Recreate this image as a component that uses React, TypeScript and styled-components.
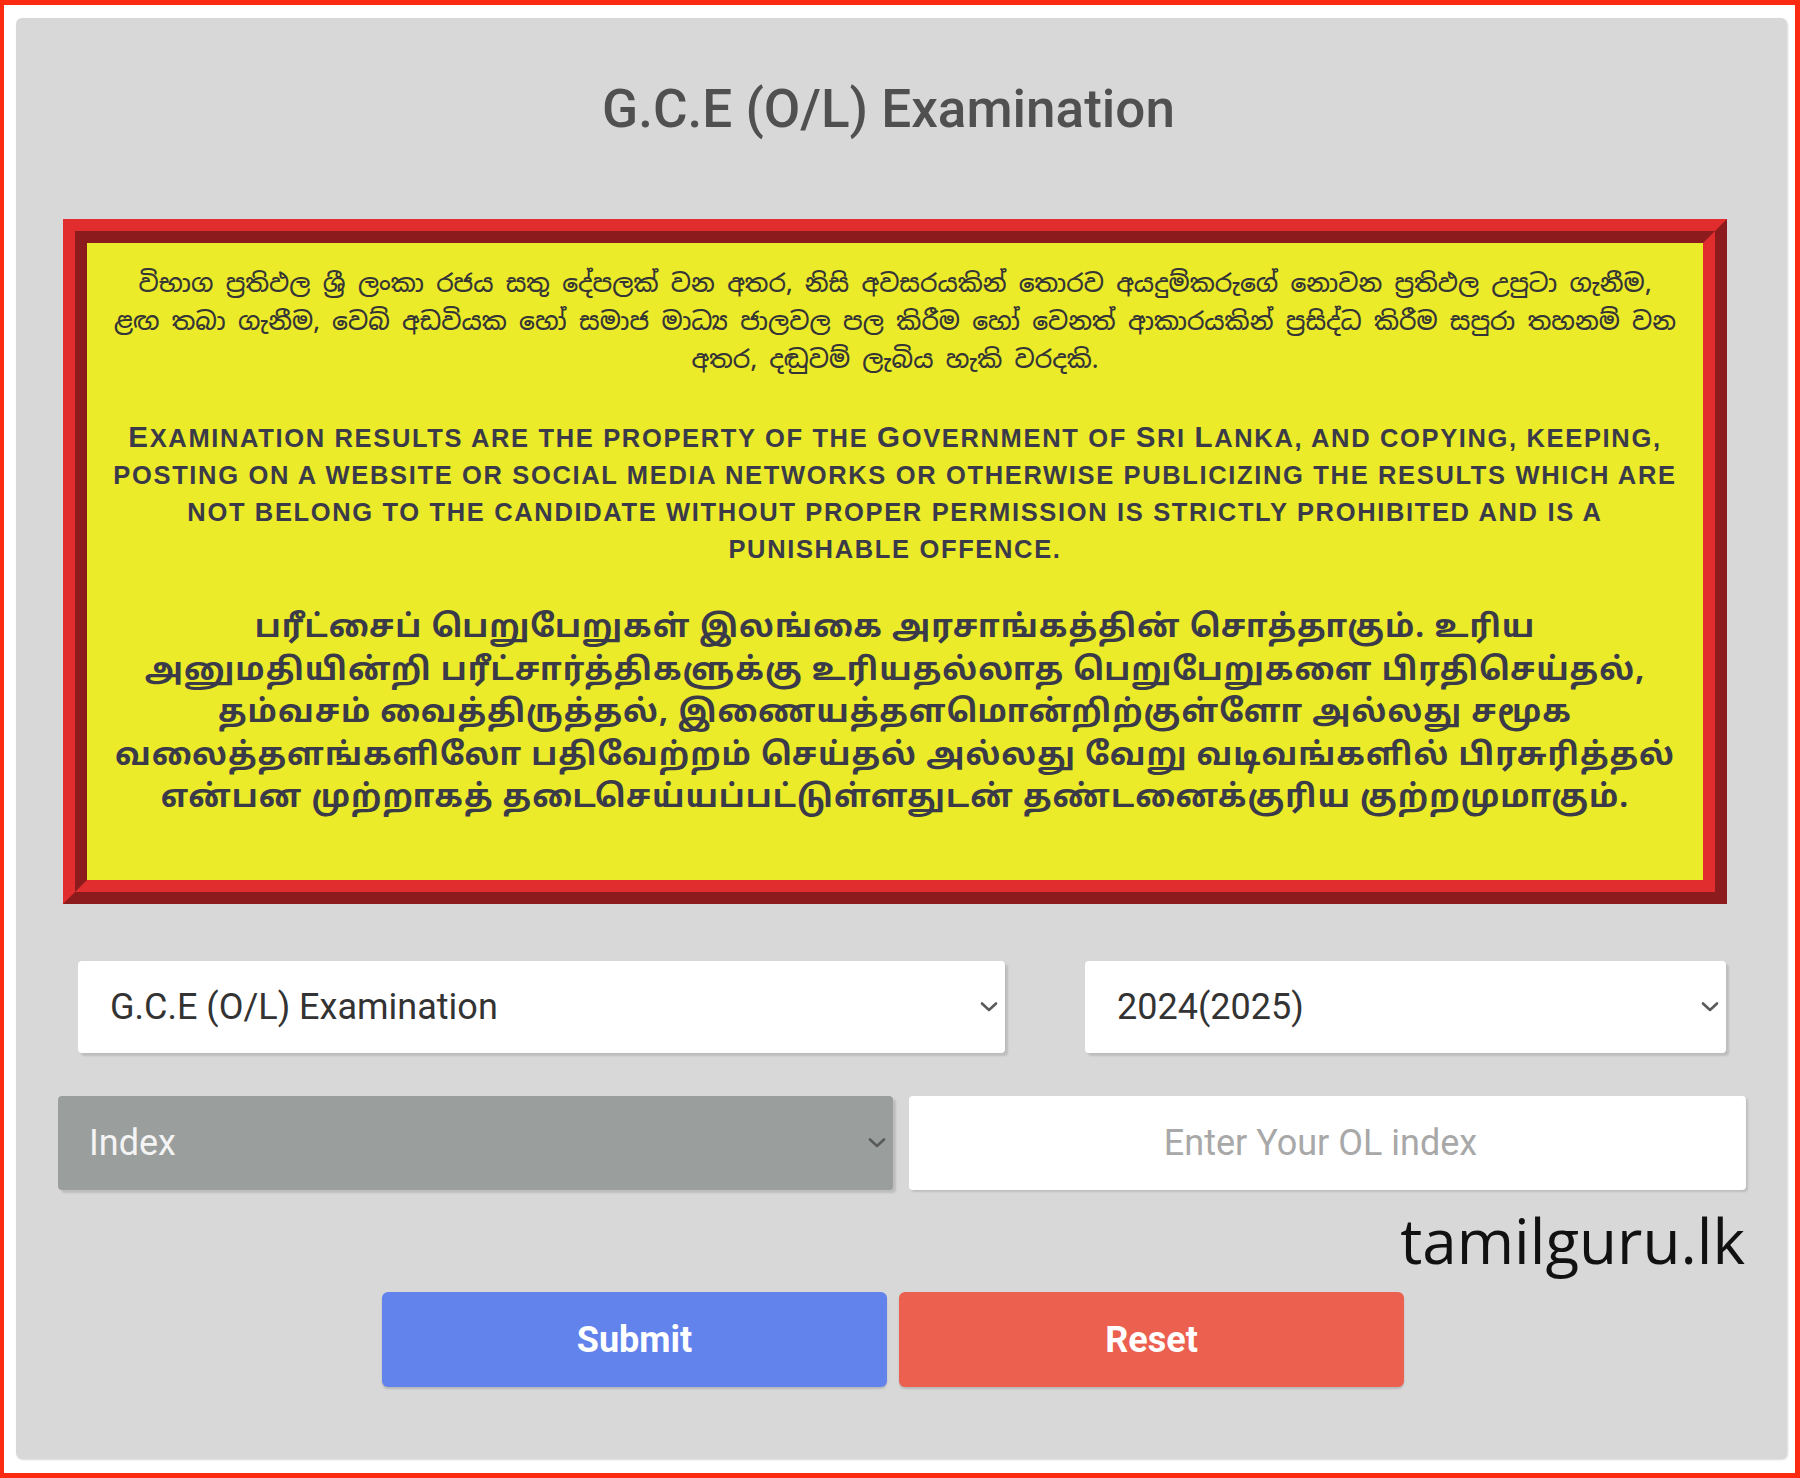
import styled, { createGlobalStyle } from "styled-components";

const GlobalStyle = createGlobalStyle`
  html, body {
    margin: 0;
    padding: 0;
    background: #fff;
  }
  * {
    box-sizing: border-box;
  }
`;

const Frame = styled.div`
  width: 1800px;
  height: 1478px;
  border: 5px solid #fd2a12;
  border-left-width: 4px;
  background: #fff;
  padding: 13px 8px 14px 12px;
`;

const Panel = styled.div`
  height: 100%;
  background: #d8d8d8;
  border-radius: 6px;
  box-shadow: 1px 1px 2px rgba(0, 0, 0, 0.15);
  padding: 58px 0 0;
  font-family: Roboto, "Liberation Sans", sans-serif;
`;

const Title = styled.h1`
  margin: 0;
  padding-right: 26px;
  text-align: center;
  font-size: 53px;
  line-height: 66px;
  font-weight: 500;
  color: #505050;
`;

const Notice = styled.div`
  margin: 77px 60px 0 47px;
  height: 685px;
  border: 12px solid;
  border-color: #e22d2f #8c1b1d #8c1b1d #e22d2f;
`;

const NoticeInner = styled.div`
  height: 100%;
  border: 12px solid;
  border-color: #8c1b1d #e22d2f #e22d2f #8c1b1d;
  background: #ebeb2a;
  padding-top: 21px;
  text-align: center;
`;

const Para = styled.div<{ $gap: number }>`
  margin-top: ${(p) => p.$gap}px;
`;

const Line = styled.div<{ $lh: number }>`
  white-space: nowrap;
  line-height: ${(p) => p.$lh}px;
`;

const Sinhala = styled(Para)`
  font-family: "Noto Sans Sinhala", "Iskoola Pota", "Noto Sans", sans-serif;
  font-size: 24.6px;
  font-weight: 500;
  color: #353535;
`;

const English = styled(Para)`
  font-family: "Liberation Sans", Arial, sans-serif;
  font-weight: 700;
  font-size: 25.5px;
  text-transform: uppercase;
  letter-spacing: 1.65px;
  color: #3a3a48;
`;

const Cap = styled.span`
  font-size: 29.5px;
`;

const Tamil = styled(Para)`
  font-family: "Noto Sans Tamil", Latha, "Noto Sans", sans-serif;
  font-weight: 700;
  font-size: 31.3px;
  letter-spacing: 1px;
  color: #3a3a48;
`;

const RowOne = styled.div`
  display: grid;
  grid-template-columns: 927px 641px;
  justify-content: space-between;
  padding: 0 61px 0 62px;
  margin-top: 57px;
`;

const RowTwo = styled.div`
  display: grid;
  grid-template-columns: 835px 837px;
  justify-content: space-between;
  padding: 0 41px 0 42px;
  margin-top: 43px;
`;

const SelectBox = styled.div<{ $dark?: boolean }>`
  position: relative;
  height: ${(p) => (p.$dark ? 94 : 92)}px;
  display: flex;
  align-items: center;
  padding-left: ${(p) => (p.$dark ? 31 : 32)}px;
  border-radius: 4px;
  background: ${(p) => (p.$dark ? "#9a9f9e" : "#fff")};
  color: ${(p) => (p.$dark ? "#f4f4f4" : "#333")};
  font-size: 36px;
  box-shadow: 3px 3px 2px rgba(0, 0, 0, 0.12);
`;

const ChevronIcon = styled.svg`
  position: absolute;
  right: 6px;
  top: 50%;
  margin-top: -6px;
`;

function Chevron() {
  return (
    <ChevronIcon width="20" height="12" viewBox="0 0 20 12" fill="none">
      <polyline
        points="3,2.5 10,9 17,2.5"
        stroke="#5a5a5a"
        strokeWidth="2.6"
        strokeLinecap="round"
        strokeLinejoin="round"
      />
    </ChevronIcon>
  );
}

const TextInput = styled.div`
  height: 94px;
  display: flex;
  align-items: center;
  justify-content: center;
  padding-right: 14px;
  background: #fff;
  border-radius: 4px;
  color: #a8a8a8;
  font-size: 36px;
  box-shadow: 2px 2px 2px rgba(0, 0, 0, 0.12);
`;

const Brand = styled.div`
  text-align: right;
  padding-right: 42px;
  margin-top: 2px;
  height: 100px;
  font-family: "Open Sans", sans-serif;
  font-size: 62px;
  line-height: 96px;
  color: #111;
`;

const Actions = styled.div`
  display: flex;
  justify-content: flex-start;
  gap: 12px;
  padding-left: 366px;
`;

const Button = styled.div<{ $bg: string }>`
  width: 505px;
  height: 95px;
  display: flex;
  align-items: center;
  justify-content: center;
  border-radius: 6px;
  background: ${(p) => p.$bg};
  color: #fff;
  font-weight: 700;
  font-size: 36px;
  box-shadow: 0 2px 2px rgba(0, 0, 0, 0.15);
`;

const sinhala = [
  "විභාග ප්‍රතිඵල ශ්‍රී ලංකා රජය සතු දේපලක් වන අතර, නිසි අවසරයකින් තොරව අයදුම්කරුගේ නොවන ප්‍රතිඵල උපුටා ගැනීම,",
  "ළඟ තබා ගැනීම, වෙබ් අඩවියක හෝ සමාජ මාධ්‍ය ජාලවල පල කිරීම හෝ වෙනත් ආකාරයකින් ප්‍රසිද්ධ කිරීම සපුරා තහනම් වන",
  "අතර, දඬුවම් ලැබිය හැකි වරදකි.",
];

const english = [
  <>
    <Cap>E</Cap>xamination results are the property of the <Cap>G</Cap>overnment of{" "}
    <Cap>S</Cap>ri <Cap>L</Cap>anka, and copying, keeping,
  </>,
  <>posting on a website or social media networks or otherwise publicizing the results which are</>,
  <>not belong to the candidate without proper permission is strictly prohibited and is a</>,
  <>punishable offence.</>,
];

const tamil = [
  "பரீட்சைப் பெறுபேறுகள் இலங்கை அரசாங்கத்தின் சொத்தாகும். உரிய",
  "அனுமதியின்றி பரீட்சார்த்திகளுக்கு உரியதல்லாத பெறுபேறுகளை பிரதிசெய்தல்,",
  "தம்வசம் வைத்திருத்தல், இணையத்தளமொன்றிற்குள்ளோ அல்லது சமூக",
  "வலைத்தளங்களிலோ பதிவேற்றம் செய்தல் அல்லது வேறு வடிவங்களில் பிரசுரித்தல்",
  "என்பன முற்றாகத் தடைசெய்யப்பட்டுள்ளதுடன் தண்டனைக்குரிய குற்றமுமாகும்.",
];

export default function App() {
  return (
    <>
      <GlobalStyle />
      <Frame>
        <Panel>
          <Title>G.C.E (O/L) Examination</Title>

          <Notice>
            <NoticeInner>
              <Sinhala $gap={0}>
                {sinhala.map((l) => (
                  <Line $lh={38} key={l}>{l}</Line>
                ))}
              </Sinhala>
              <English $gap={40}>
                {english.map((l, i) => (
                  <Line $lh={37} key={i}>{l}</Line>
                ))}
              </English>
              <Tamil $gap={41}>
                {tamil.map((l) => (
                  <Line $lh={42.5} key={l}>{l}</Line>
                ))}
              </Tamil>
            </NoticeInner>
          </Notice>

          <RowOne>
            <SelectBox>
              G.C.E (O/L) Examination
              <Chevron />
            </SelectBox>
            <SelectBox>
              2024(2025)
              <Chevron />
            </SelectBox>
          </RowOne>

          <RowTwo>
            <SelectBox $dark>
              Index
              <Chevron />
            </SelectBox>
            <TextInput>Enter Your OL index</TextInput>
          </RowTwo>

          <Brand>tamilguru.lk</Brand>

          <Actions>
            <Button $bg="#6283ec">Submit</Button>
            <Button $bg="#ec604f">Reset</Button>
          </Actions>
        </Panel>
      </Frame>
    </>
  );
}
